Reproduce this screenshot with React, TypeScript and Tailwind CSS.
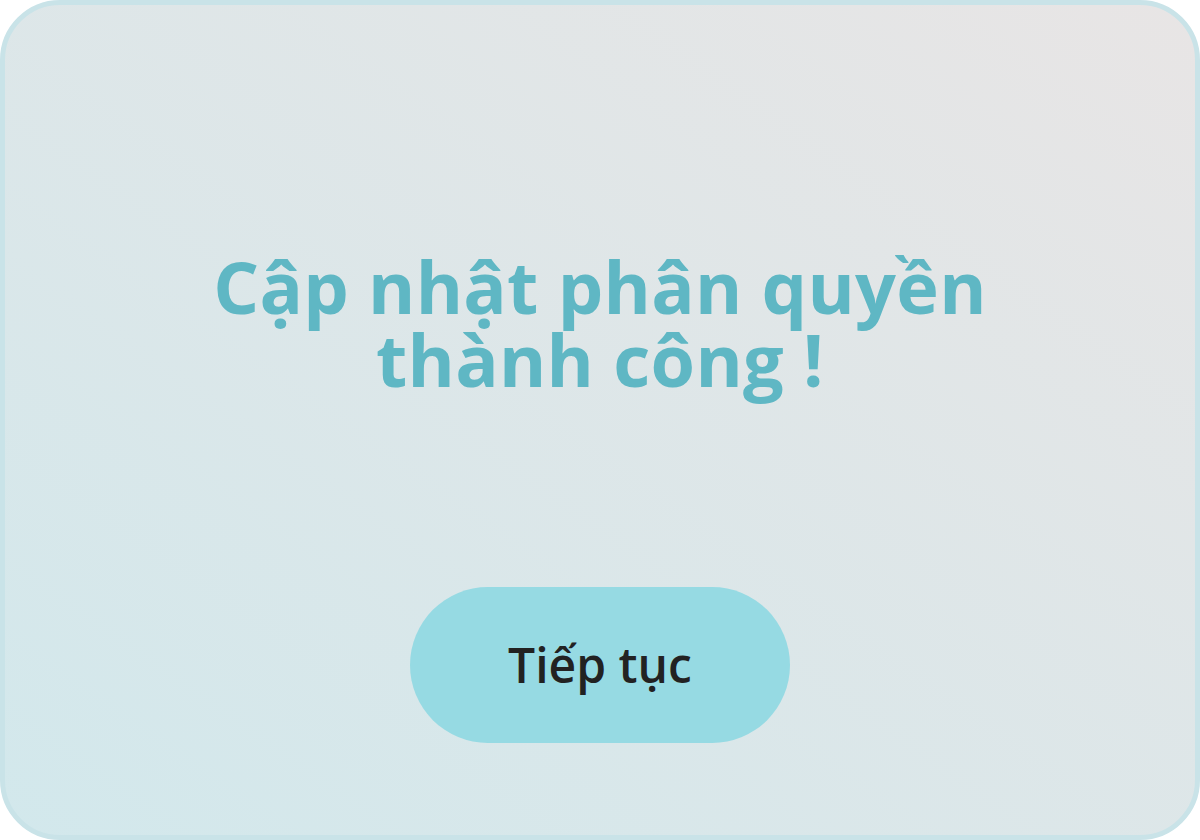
export default function App() {
  return (
    <div className="w-[1200px] h-[840px] bg-white" style={{ fontFamily: '"Open Sans", "Noto Sans", sans-serif' }}>
      <div className="w-full h-full rounded-[60px] border-[5px] border-[#c9e3e8] bg-linear-to-tr from-[#d2e8ec] to-[#e8e5e5] flex flex-col items-center pt-[245px]">
        <h1 className="text-[72px] tracking-[0.3px] leading-[73px] font-bold text-[#5fb7c4] text-center">
          Cập nhật phân quyền
          <br />
          thành công !
        </h1>
        <button className="mt-[191px] w-[380px] h-[156px] rounded-full bg-[#96dae3] text-[#222222] text-[48px] font-semibold flex items-center justify-center">
          Tiếp tục
        </button>
      </div>
    </div>
  );
}
